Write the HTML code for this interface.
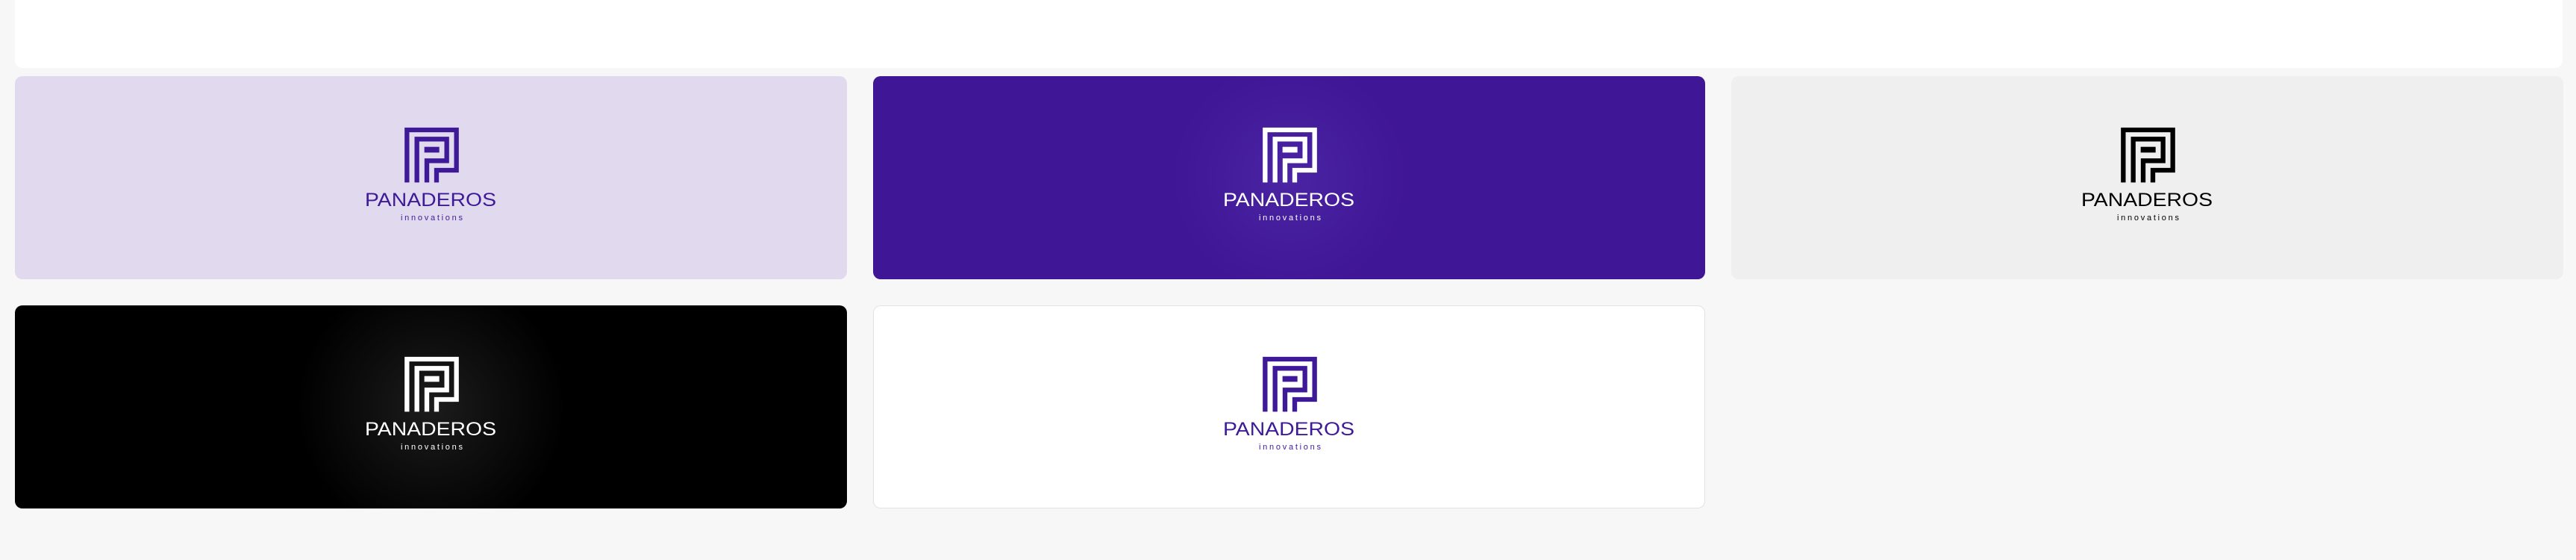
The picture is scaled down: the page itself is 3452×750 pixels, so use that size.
<!DOCTYPE html>
<html><head><meta charset="utf-8"><style>
html,body{margin:0;padding:0;background:#f7f7f7;width:3452px;height:750px;overflow:hidden;font-family:"Liberation Sans",sans-serif}
.top{position:absolute;left:20px;top:0;width:3414px;height:91px;background:#fff;border-radius:0 0 10px 10px}
.card{position:absolute;width:1115px;height:272px;border-radius:10px;overflow:hidden}
.card svg{position:absolute;left:0;top:0;width:1115px;height:272px}
</style></head><body>
<div class="top"></div>
<svg width="0" height="0" style="position:absolute"><defs>
<g id="icon">
<path d="M255,283 V72 H454 V234 H374 V283" fill="none" stroke-width="19"/>
<path d="M295,283 V109 H415 V196 H335 V283" fill="none" stroke-width="19"/>
<rect x="325" y="140" width="60" height="23" stroke="none"/>
</g>
</defs></svg>

<div class="card" style="left:20px;top:102px;background:#e1daee">
<svg viewBox="0 0 1115 272"><g fill="#3f1a98" stroke="#3f1a98"><g transform="translate(522,69) scale(0.3333) translate(-245,-63)"><use href="#icon"/></g>
<text x="469" y="174" font-size="25" textLength="176" lengthAdjust="spacingAndGlyphs" stroke="none">PANADEROS</text>
<text x="517" y="193" font-size="11" textLength="83" lengthAdjust="spacing" stroke="none">innovations</text></g></svg></div>

<div class="card" style="left:1170px;top:102px;background:radial-gradient(circle at 558px 136px,#4a24a3 0,#3f1695 160px)">
<svg viewBox="0 0 1115 272"><g fill="#fff" stroke="#fff"><g transform="translate(522,69) scale(0.3333) translate(-245,-63)"><use href="#icon"/></g>
<text x="469" y="174" font-size="25" textLength="176" lengthAdjust="spacingAndGlyphs" stroke="none">PANADEROS</text>
<text x="517" y="193" font-size="11" textLength="83" lengthAdjust="spacing" stroke="none">innovations</text></g></svg></div>

<div class="card" style="left:2320px;top:102px;background:#efefef">
<svg viewBox="0 0 1115 272"><g fill="#000" stroke="#000"><g transform="translate(522,69) scale(0.3333) translate(-245,-63)"><use href="#icon"/></g>
<text x="469" y="174" font-size="25" textLength="176" lengthAdjust="spacingAndGlyphs" stroke="none">PANADEROS</text>
<text x="517" y="193" font-size="11" textLength="83" lengthAdjust="spacing" stroke="none">innovations</text></g></svg></div>

<div class="card" style="left:20px;top:409px;background:radial-gradient(circle at 558px 136px,#1c1c1c 0,#0c0c0c 100px,#000 180px)">
<svg viewBox="0 0 1115 272"><g fill="#fff" stroke="#fff"><g transform="translate(522,69) scale(0.3333) translate(-245,-63)"><use href="#icon"/></g>
<text x="469" y="174" font-size="25" textLength="176" lengthAdjust="spacingAndGlyphs" stroke="none">PANADEROS</text>
<text x="517" y="193" font-size="11" textLength="83" lengthAdjust="spacing" stroke="none">innovations</text></g></svg></div>

<div class="card" style="left:1170px;top:409px;background:#fff;box-shadow:inset 0 0 0 1px #e2e2e2">
<svg viewBox="0 0 1115 272"><g fill="#3f1a98" stroke="#3f1a98"><g transform="translate(522,69) scale(0.3333) translate(-245,-63)"><use href="#icon"/></g>
<text x="469" y="174" font-size="25" textLength="176" lengthAdjust="spacingAndGlyphs" stroke="none">PANADEROS</text>
<text x="517" y="193" font-size="11" textLength="83" lengthAdjust="spacing" stroke="none">innovations</text></g></svg></div>
</body></html>
